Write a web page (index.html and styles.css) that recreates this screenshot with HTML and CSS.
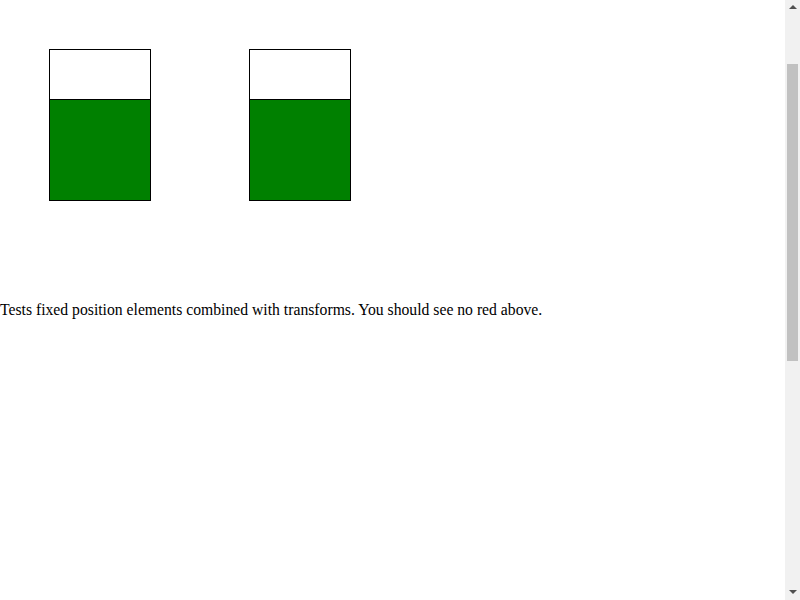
FILE: index.html
```html
<!DOCTYPE html>
<html>
<head>
<meta charset="utf-8">
<link rel="stylesheet" href="styles.css">
</head>
<body>
<div class="boxes">
  <div class="box"><div class="top"></div><div class="bottom"></div></div>
  <div class="box"><div class="top"></div><div class="bottom"></div></div>
</div>
<p class="note">Tests fixed position elements combined with transforms. You should see no red above.</p>
<div class="scrollbar" aria-hidden="true">
  <div class="arrow"><svg width="8" height="5" viewBox="0 0 8 5"><polygon points="0,4 4,0 8,4" fill="#505050"/></svg></div>
  <div class="track"><div class="thumb"></div></div>
  <div class="arrow"><svg width="8" height="5" viewBox="0 0 8 5"><polygon points="0,0 8,0 4,4" fill="#505050"/></svg></div>
</div>
<script src="script.js"></script>
</body>
</html>
```

FILE: styles.css
```css
html, body {
  margin: 0;
  padding: 0;
}
body {
  font-family: "Liberation Serif", serif;
  font-size: 16px;
  color: #000;
  background: #fff;
  min-height: 1150px;
}
.boxes {
  display: flex;
  gap: 98px;
  padding: 149px 0 0 49px;
}
.box {
  width: 100px;
  border: 1px solid #000;
}
.top {
  height: 49px;
  border-bottom: 1px solid #000;
  background: #fff;
}
.bottom {
  height: 100px;
  background: #008000;
}
.note {
  margin: 100px 0 0 0;
  font-size: 15.7px;
}
.scrollbar {
  position: fixed;
  top: 0;
  right: 0;
  width: 15px;
  height: 100vh;
  background: #f1f1f1;
  display: flex;
  flex-direction: column;
}
.arrow {
  height: 15px;
  display: flex;
  align-items: center;
  justify-content: center;
}
.arrow svg {
  display: block;
}
.track {
  flex: 1;
  padding-top: 49px;
}
.thumb {
  height: 297px;
  margin: 0 2px;
  background: #c1c1c1;
}
```

FILE: script.js
```js
window.scrollTo(0, 100);
```
